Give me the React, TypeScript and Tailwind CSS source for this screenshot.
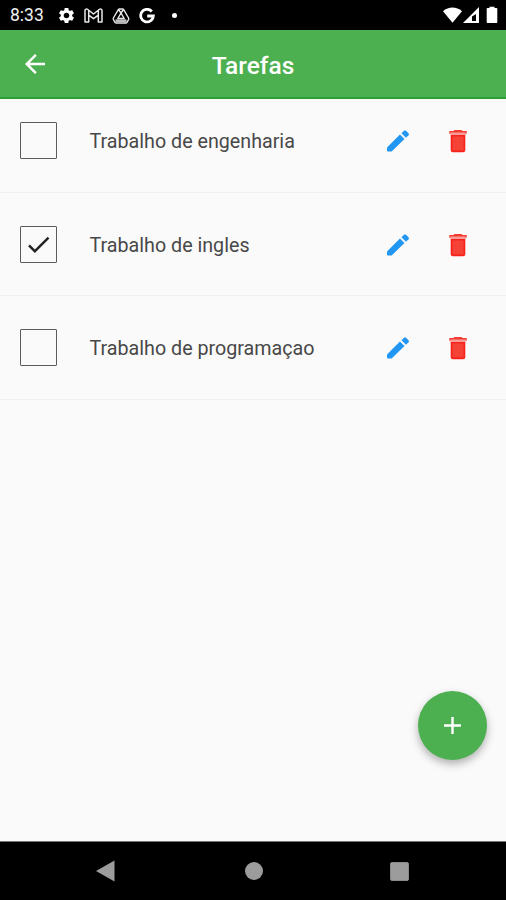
import { useState } from 'react'
import { MdAdd, MdArrowBack, MdCheck, MdSettings } from 'react-icons/md'

type Task = { id: number; title: string; done: boolean; rowClass: string }

const initialTasks: Task[] = [
  { id: 1, title: 'Trabalho de engenharia', done: false, rowClass: 'h-[94px] pb-[32px]' },
  { id: 2, title: 'Trabalho de ingles', done: true, rowClass: 'h-[103px] pb-[31px]' },
  { id: 3, title: 'Trabalho de programaçao', done: false, rowClass: 'h-[104px] pb-[32px]' },
]

function GmailIcon() {
  return (
    <svg width="19" height="15" viewBox="0 0 19 15" fill="none" stroke="#e8e8e8" strokeWidth="1.5" strokeLinejoin="round">
      <path d="M1 14V2.5C1 1 2.7.6 3.8 1.5L9.5 6l5.7-4.5C16.3.6 18 1 18 2.5V14h-3.7V7.2L9.5 10.7 4.7 7.2V14zM4.7 7.2V2.5M14.3 7.2V2.5" />
    </svg>
  )
}

function DriveIcon() {
  return (
    <svg width="18" height="16" viewBox="0 0 18 16" fill="none" stroke="#e8e8e8" strokeWidth="1.4" strokeLinejoin="round">
      <path d="M7.5 1h3q.8 0 1.200.7L16.600 10q.4.8 0 1.500l-1.600 2.800q-.4.7-1.200.7H4.200q-.8 0-1.200-.7l-1.600-2.800q-.4-.7 0-1.500L6.300 1.700Q6.700 1 7.500 1zM9 5l-3.200 5.500h6.400zM6.500 1.500L9 5l2.500-3.500" />
      <path d="M3.500 12.800h11" stroke="#bdbdbd" strokeWidth="3" />
    </svg>
  )
}

function GoogleIcon() {
  return (
    <svg width="16" height="16" viewBox="0 0 16 16" fill="none" stroke="#fff" strokeWidth="2.8">
      <path d="M12.8 3.5A6.3 6.3 0 1 0 14.3 8H8.2" />
    </svg>
  )
}

function PencilIcon() {
  return (
    <svg width="24" height="24" viewBox="0 0 24 24" fill="#2196f3">
      <path d="M1 18.400L13.900 5.500l4.600 4.600L5.600 22.500H2q-1 0-1-1z" />
      <path d="M15.500 4.200l2.500-2.500q1-1 2 0l2.500 2.500q1 1 0 2L20 8.700z" />
    </svg>
  )
}

function TrashIcon() {
  return (
    <svg width="20" height="23" viewBox="0 0 20 23">
      <path d="M6.500 0h7l1 1h4.200v2.700H1.300V1h4.200z" fill="#f33b32" />
      <path d="M2.300 2.500h15.400v2.600H2.300z" fill="#fa9d98" />
      <path d="M2.700 5h14.600v15a2.200 2.200 0 0 1-2.200 2.200H4.900a2.200 2.200 0 0 1-2.200-2.200z" fill="#f6241d" />
      <path d="M4.500 6.500h11v13.800h-11z" fill="#f44336" />
    </svg>
  )
}

function StatusBar() {
  return (
    <div className="flex h-[30px] shrink-0 items-center justify-between bg-black pl-[10px] pr-[6px] text-white">
      <div className="flex items-center pt-px">
        <span className="w-[47px] pt-px text-[17.5px] leading-none text-[#f0f0f0]">8:33</span>
        <MdSettings size={19} />
        <span className="ml-[8px]"><GmailIcon /></span>
        <span className="ml-[9px]"><DriveIcon /></span>
        <span className="ml-[9px]"><GoogleIcon /></span>
        <span className="ml-[17px] size-[5px] rounded-full bg-white" />
      </div>
      <svg width="64" height="18" viewBox="0 0 64 18" fill="#fff">
        <path d="M7 5.200C12.500.3 20.500.3 26 5.200L16.500 16.800z" />
        <path fillRule="evenodd" d="M27 17L43 1v16zM36 10.500V15h4V8z" />
        <path d="M53.500 2V.7h5V2h2c.5 0 .8.4.8.8v13.400c0 .5-.3.800-.8.800h-9c-.5 0-.8-.3-.8-.8V2.800c0-.4.300-.8.800-.8z" />
      </svg>
    </div>
  )
}

function TaskRow({ task, onToggle, onDelete }: { task: Task; onToggle: () => void; onDelete: () => void }) {
  return (
    <li className={`flex items-end border-b border-[#f0f0f0] pl-[20px] pr-[38.5px] ${task.rowClass}`}>
      <div className="flex h-[38px] flex-1 items-center">
        <button onClick={onToggle} className="mb-px flex size-[37px] items-center justify-center rounded-[1px] border border-[#5c5c5c] text-[#222]">
          {task.done && <MdCheck size={29} />}
        </button>
        <span className="ml-[32.5px] flex-1 pt-[2px] text-[19.7px] leading-none text-[#484848]">{task.title}</span>
        <button className="mb-px"><PencilIcon /></button>
        <button onClick={onDelete} className="ml-[37.5px]"><TrashIcon /></button>
      </div>
    </li>
  )
}

export default function App() {
  const [tasks, setTasks] = useState<Task[]>(initialTasks)

  const toggle = (id: number) => setTasks(tasks.map((t) => (t.id === id ? { ...t, done: !t.done } : t)))
  const remove = (id: number) => setTasks(tasks.filter((t) => t.id !== id))

  return (
    <div className="flex h-[900px] w-[506px] flex-col overflow-hidden bg-[#fafafa] font-['Roboto',sans-serif]">
      <StatusBar />

      {/* App bar */}
      <header className="grid h-[69px] shrink-0 grid-cols-[1fr_auto_1fr] items-center border-b-2 border-[#2ca035] bg-[#4caf50] text-white">
        <button className="pl-[20px] pt-px"><MdArrowBack size={30} /></button>
        <h1 className="pt-[5px] text-[24.5px] font-medium leading-none">Tarefas</h1>
      </header>

      <main className="flex flex-1 flex-col justify-between">
        <ul>
          {tasks.map((task) => (
            <TaskRow key={task.id} task={task} onToggle={() => toggle(task.id)} onDelete={() => remove(task.id)} />
          ))}
        </ul>
        <div className="flex justify-end pb-[81px] pr-[19px]">
          <button className="flex size-[69px] items-center justify-center rounded-full bg-[#4caf50] text-white shadow-[0_4px_8px_rgba(0,0,0,0.3)]">
            <MdAdd size={29} />
          </button>
        </div>
      </main>

      {/* System navigation */}
      <nav className="flex h-[59px] shrink-0 items-center justify-between border-t border-[#777] bg-black pl-[96px] pr-[97px]">
        <svg width="19" height="22" viewBox="0 0 19 22"><path d="M0 11L18.500.5v21z" fill="#9c9c9c" /></svg>
        <span className="ml-[2px] size-[18px] rounded-full bg-[#9c9c9c]" />
        <span className="size-[19px] rounded-[2px] border border-[#8a8a8a] bg-[#9c9c9c]" />
      </nav>
    </div>
  )
}
